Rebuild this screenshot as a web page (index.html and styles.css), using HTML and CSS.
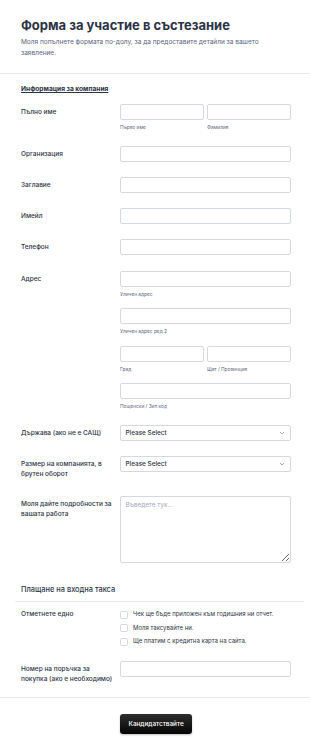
FILE: index.html
```html
<!DOCTYPE html>
<html lang="bg">
<head>
    <meta charset="UTF-8">
    <meta name="viewport" content="width=device-width, initial-scale=1.0">
    <title>Форма за участие в състезание</title>
    <link rel="stylesheet" href="styles.css">
</head>
<body>
    <div class="form">
        <div class="form-header">
            <h1>Форма за участие в състезание</h1>
            <p>Моля попълнете формата по-долу, за да предоставите детайли за вашето заявление.</p>
        </div>

        <div class="section">
            <div class="section-title">Информация за компания</div>

            <div class="row">
                <label>Пълно име</label>
                <div class="field">
                    <div class="pair">
                        <div>
                            <input type="text">
                            <span class="sublabel">Първо име</span>
                        </div>
                        <div>
                            <input type="text">
                            <span class="sublabel">Фамилия</span>
                        </div>
                    </div>
                </div>
            </div>

            <div class="row">
                <label>Организация</label>
                <div class="field"><input type="text"></div>
            </div>

            <div class="row">
                <label>Заглавие</label>
                <div class="field"><input type="text"></div>
            </div>

            <div class="row">
                <label>Имейл</label>
                <div class="field"><input type="text"></div>
            </div>

            <div class="row">
                <label>Телефон</label>
                <div class="field"><input type="text"></div>
            </div>

            <div class="row">
                <label>Адрес</label>
                <div class="field address">
                    <div>
                        <input type="text">
                        <span class="sublabel">Уличен адрес</span>
                    </div>
                    <div>
                        <input type="text">
                        <span class="sublabel">Уличен адрес ред 2</span>
                    </div>
                    <div class="pair">
                        <div>
                            <input type="text">
                            <span class="sublabel">Град</span>
                        </div>
                        <div>
                            <input type="text">
                            <span class="sublabel">Щат / Провинция</span>
                        </div>
                    </div>
                    <div>
                        <input type="text">
                        <span class="sublabel">Пощенски / Зип код</span>
                    </div>
                </div>
            </div>

            <div class="row">
                <label>Държава (ако не е САЩ)</label>
                <div class="field">
                    <div class="select">
                        <span>Please Select</span>
                        <svg width="6" height="4" viewBox="0 0 6 4"><path d="M1 1l2 2 2-2" fill="none" stroke="#8a93a8" stroke-width="0.8"/></svg>
                    </div>
                </div>
            </div>

            <div class="row">
                <label class="tall">Размер на компанията, в брутен оборот</label>
                <div class="field">
                    <div class="select">
                        <span>Please Select</span>
                        <svg width="6" height="4" viewBox="0 0 6 4"><path d="M1 1l2 2 2-2" fill="none" stroke="#8a93a8" stroke-width="0.8"/></svg>
                    </div>
                </div>
            </div>

            <div class="row">
                <label>Моля дайте подробности за вашата работа</label>
                <div class="field">
                    <textarea placeholder="Въведете тук..."></textarea>
                </div>
            </div>
        </div>

        <div class="section">
            <div class="subheading">Плащане на входна такса</div>

            <div class="row">
                <label class="inline">Отметнете едно</label>
                <div class="field checks">
                    <div class="check"><span class="box"></span>Чек ще бъде приложен към годишния ни отчет.</div>
                    <div class="check"><span class="box"></span>Моля таксувайте ни.</div>
                    <div class="check"><span class="box"></span>Ще платим с кредитна карта на сайта.</div>
                </div>
            </div>

            <div class="row">
                <label>Номер на поръчка за покупка (ако е необходимо)</label>
                <div class="field"><input type="text"></div>
            </div>
        </div>

        <div class="form-footer">
            <button type="submit" class="btn">Кандидатствайте</button>
        </div>
    </div>
</body>
</html>
```

FILE: styles.css
```css
body {
    font-family: Inter, "Noto Sans", sans-serif;
    background-color: #fff;
    color: #2c3345;
    margin: 0;
    padding: 0;
}
.form-header {
    padding: 15px 21px 15px;
    border-bottom: 1px solid #e6e9ef;
}
h1 {
    margin: 0;
    font-size: 13px;
    font-weight: 700;
    line-height: 20px;
    color: #2c3345;
}
.form-header p {
    max-width: 255px;
    margin: 2px 0 0;
    font-size: 6.5px;
    line-height: 10.5px;
    color: #57647e;
}
.section {
    padding: 7px 19px 0 21px;
}
.section-title {
    font-size: 6.6px;
    font-weight: 700;
    text-decoration: underline;
    line-height: 10px;
    padding: 3px 0 2px;
}
.subheading {
    margin: 0 -13px 0 -6px;
    padding: 7px 6px 6px;
    font-size: 7.4px;
    font-weight: 500;
    line-height: 10px;
    border-bottom: 1px solid #e6e9ef;
}
.row {
    display: grid;
    grid-template-columns: 99px 1fr;
    padding: 7.6px 0;
}
label {
    font-size: 6.5px;
    font-weight: 500;
    line-height: 10px;
    padding: 3px 4px 0 0;
}
label.tall {
    padding-bottom: 1.5px;
}
label.inline {
    padding-top: 0;
}
input[type="text"], .select, textarea {
    display: block;
    width: 100%;
    height: 16px;
    box-sizing: border-box;
    border: 1px solid #d3d8e2;
    border-radius: 2px;
    background: #fff;
    margin: 0;
    font-family: inherit;
}
.sublabel {
    display: block;
    font-size: 4.8px;
    line-height: 8px;
    color: #57647e;
    margin-top: 3px;
}
.pair {
    display: grid;
    grid-template-columns: 1fr 1fr;
    gap: 3px;
}
.address {
    display: flex;
    flex-direction: column;
    gap: 10.5px;
}
.select {
    display: flex;
    justify-content: space-between;
    align-items: center;
    padding: 0 5px 0 4.5px;
    font-size: 6.4px;
    font-weight: 500;
}
textarea {
    height: 67px;
    padding: 4px 4.5px;
    font-size: 6.4px;
    resize: vertical;
}
textarea::placeholder {
    color: #a0a8b8;
}
.checks {
    display: flex;
    flex-direction: column;
    gap: 5px;
    padding-top: 1px;
}
.check {
    display: flex;
    align-items: center;
    font-size: 6px;
    line-height: 8.5px;
}
.box {
    width: 8px;
    height: 8px;
    box-sizing: border-box;
    border: 1px solid #d3d8e2;
    border-radius: 1.5px;
    margin-right: 5px;
}
.form-footer {
    margin-top: 5px;
    border-top: 1px solid #e6e9ef;
    padding: 12px 0 16px 120px;
}
.btn {
    background: linear-gradient(#2e2e2e, #050505);
    color: #fff;
    border: none;
    border-radius: 3px;
    height: 20px;
    padding: 0 8.5px;
    font-family: inherit;
    font-size: 6.4px;
    font-weight: 500;
    box-shadow: 0 1px 2px rgba(0, 0, 0, 0.25);
}
```
